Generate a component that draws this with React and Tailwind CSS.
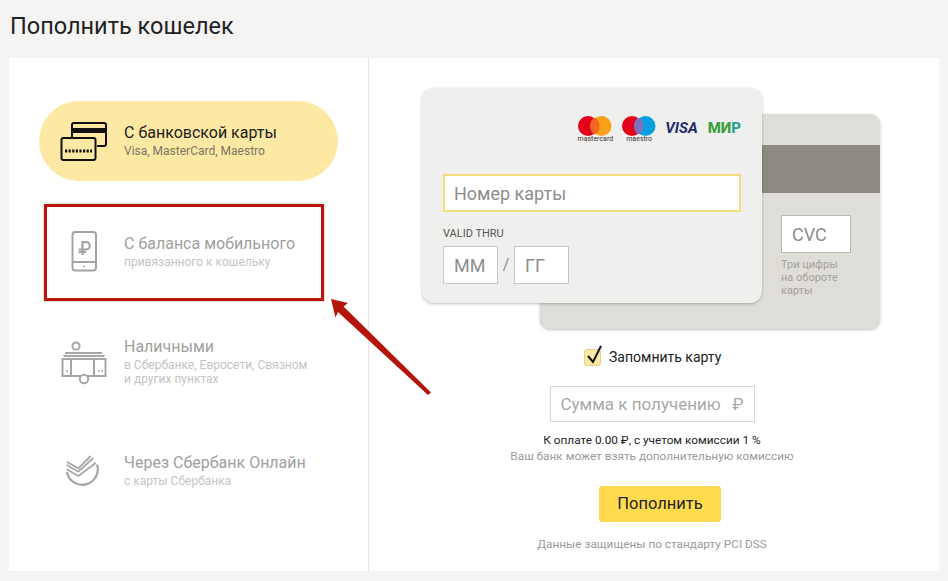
const CardIcon = () => (
  <svg width="48" height="40" viewBox="0 0 48 40" fill="none" stroke="#111" strokeWidth="2">
    <path d="M12 17V4a2 2 0 0 1 2-2h30a2 2 0 0 1 2 2v19a2 2 0 0 1-2 2h-7" />
    <rect x="12" y="7" width="34" height="5" fill="#111" stroke="none" />
    <rect x="1.500" y="17" width="34" height="22" rx="2" fill="#fde9a3" />
    <path d="M5 30h27" strokeWidth="3" strokeDasharray="2.200 1.400" />
  </svg>
);

const PhoneIcon = () => (
  <svg width="27" height="42" viewBox="0 0 27 42" fill="none" stroke="#a3a3a3" strokeWidth="2">
    <rect x="1.500" y="1" width="23.500" height="38.500" rx="3" />
    <path d="M1.500 31h23.500" />
    <circle cx="13" cy="35.500" r="1" fill="#a3a3a3" stroke="none" />
    <path d="M11.500 24V11h3.500a3.700 3.700 0 0 1 0 7.500h-7.500M7.500 21h7.500" strokeWidth="2.200" />
  </svg>
);

const CashIcon = () => (
  <svg width="46" height="45" viewBox="0 0 46 45" fill="none" stroke="#a6a6a4" strokeWidth="2">
    <circle cx="15" cy="6" r="3.600" />
    <path d="M4 13h37M2.500 16h41" />
    <rect x="1.500" y="19" width="43" height="17" />
    <path d="M10 19v17M33 19v17" />
    <circle cx="23" cy="39" r="4.200" fill="#fff" />
    <path d="M5.500 31h1.500M37 31h1.500M40.500 31H42" strokeWidth="2" />
  </svg>
);

const SberIcon = () => (
  <svg width="36" height="34" viewBox="0 0 36 34" fill="none" stroke="#a6a6a4" strokeWidth="2">
    <path d="M1 18A15.500 15.500 0 1 0 31 10.500" strokeWidth="2.200" />
    <path d="M0.700 7.700L12.300 14.300 24.700 2M0.700 11L12.300 17.700 27.300 4M0.700 15.300L12.300 22 30 8.700" strokeWidth="1.800" />
  </svg>
);

const Arrow = () => (
  <svg className="absolute left-[325px] top-[294px]" width="110" height="105" viewBox="325 294 110 105">
    <path d="M331 299L348 303 343.500 306.500 431 392.500 428 395 338 312 335.500 317.500Z" fill="#b3150b" />
  </svg>
);

function Method({ icon, title, sub, active, className }) {
  return (
    <div className={`flex h-20 w-[299px] items-center ${active ? "rounded-full bg-[#fde9a3]" : ""} ${className}`}>
      <div className="flex w-[85px] shrink-0 justify-center pl-[5px]">{icon}</div>
      <div className="pb-[1px]">
        <div className={`text-[16px] leading-[20px] ${active ? "text-[#1c1c1c]" : "text-[#a0a0a0]"}`}>{title}</div>
        <div className={`mt-[1px] text-[12px] leading-[14px] ${active ? "text-[#7a7668]" : "text-[#c4c4c4]"}`}>{sub}</div>
      </div>
    </div>
  );
}

const TinyLogo = ({ left, right, label, overlap }) => (
  <div className="flex flex-col items-center">
    <svg width="34" height="20" viewBox="0 0 34 20">
      <circle cx="10" cy="10" r="10" fill={left} />
      <circle cx="23.500" cy="10" r="10" fill={right} />
      <path d="M16.750 1.400a10 10 0 0 1 0 17.200a10 10 0 0 1 0-17.200Z" fill={overlap} />
    </svg>
    <div className="mt-[-1px] text-[7px] leading-[8px] text-[#333]">{label}</div>
  </div>
);

export default function App() {
  return (
    <div className="relative h-[581px] w-[948px] overflow-hidden bg-[#f5f4f2] font-['Roboto','Noto_Sans',sans-serif]">
      <h1 className="pl-[10px] pt-[10px] text-[23.5px] font-normal leading-[32px] text-[#222]">Пополнить кошелек</h1>
      <div className="ml-[9px] mt-[16px] flex h-[513px] w-[930px] bg-white">
        <div className="w-[360px] shrink-0 border-r border-[#e6e6e6] pl-[30px] pt-[43px]">
          <Method active icon={<CardIcon />} title="С банковской карты" sub="Visa, MasterCard, Maestro" />
          <Method className="mt-[31px]" icon={<PhoneIcon />} title="С баланса мобильного" sub="привязанного к кошельку" />
          <Method className="mt-[30px]" icon={<CashIcon />} title="Наличными" sub={<>в Сбербанке, Евросети, Связном<br />и других пунктах</>} />
          <Method className="mt-[29px]" icon={<SberIcon />} title="Через Сбербанк Онлайн" sub="с карты Сбербанка" />
        </div>
        <div className="flex w-[566px] flex-col items-center pt-[30px]">
          <div className="relative mr-[2px] h-[241px] w-[458px]">
            <div className="absolute left-[118px] top-[26px] h-[215px] w-[340px] rounded-[10px] bg-[#dfddd7] shadow-[0_1px_3px_rgba(0,0,0,0.25)]">
              <div className="mt-[31px] h-[48px] bg-[#8c8a82]" />
              <div className="ml-[241px] mt-[22px] flex h-[38px] w-[70px] items-center border border-[#b9b8b2] bg-white pl-[10px] text-[18px] text-[#8d8d8d]">CVC</div>
              <div className="ml-[241px] mt-[5px] text-[11px] leading-[13px] text-[#a5a39c]">Три цифры<br />на обороте<br />карты</div>
            </div>
            <div className="absolute left-0 top-0 h-[215px] w-[340px] rounded-[12px] bg-[#efefed] px-[21px] pt-[28px] shadow-[0_1px_3px_rgba(0,0,0,0.25)]">
              <div className="flex h-[30px] items-start justify-end gap-[9px]">
                <TinyLogo left="#e3001b" right="#f9a01b" overlap="#f26522" label="mastercard" />
                <TinyLogo left="#e3001b" right="#0a9fe0" overlap="#7b73c0" label="maestro" />
                <div className="mt-[2px] text-[15px] font-bold italic leading-[20px] text-[#1f2a6b]">VISA</div>
                <div className="ml-[1px] mt-[2px] text-[15px] font-extrabold leading-[20px] text-[#3aa03e]">МИ<span className="text-[#2a9d8f]">Р</span></div>
              </div>
              <div className="mt-[28px] flex h-[38px] items-center border-2 border-[#f5dc7e] bg-white pl-[9px] pt-[1px] text-[18px] text-[#8d8d8d]">Номер карты</div>
              <div className="mt-[15px] text-[11px] leading-[14px] text-[#555]">VALID THRU</div>
              <div className="mt-[5px] flex items-center">
                <div className="flex h-[38px] w-[55px] items-center border border-[#c8c8c6] bg-white pl-[10px] text-[18px] text-[#8d8d8d]">ММ</div>
                <div className="w-[16px] text-center text-[16px] text-[#8d8d8d]">/</div>
                <div className="flex h-[38px] w-[55px] items-center border border-[#c8c8c6] bg-white pl-[10px] text-[18px] text-[#8d8d8d]">ГГ</div>
              </div>
            </div>
          </div>
          <div className="mt-[17px] flex h-[22px] w-[136px] items-center">
            <div className="relative h-[17px] w-[17px] shrink-0 rounded-[3px] border border-[#e3d08c] bg-[#fde9a3]">
              <svg className="absolute left-[1px] top-[-5px]" width="18" height="20" viewBox="0 0 18 20" fill="none" stroke="#111" strokeWidth="2">
                <path d="M2 11l5 6L15 1" />
              </svg>
            </div>
            <span className="ml-[8px] whitespace-nowrap text-[14px] text-[#222]">Запомнить карту</span>
          </div>
          <div className="mt-[18px] flex h-[36px] w-[205px] items-center justify-between border border-[#d6d6d6] pl-[10px] pr-[10px] pt-[1px] text-[17px] text-[#a8a8a8]">
            <span>Сумма к получению</span><span>₽</span>
          </div>
          <div className="mt-[10px] text-[11.8px] leading-[16px] text-[#222]">К оплате 0.00 ₽, с учетом комиссии 1 %</div>
          <div className="text-[11.8px] leading-[16px] text-[#9a9a9a]">Ваш банк может взять дополнительную комиссию</div>
          <div className="ml-[16px] mt-[22px] flex h-[36px] w-[122px] items-center justify-center rounded-[3px] bg-[#ffdb4d] text-[16.5px] text-[#222]">Пополнить</div>
          <div className="mt-[14px] text-[11.8px] leading-[16px] text-[#9a9a9a]">Данные защищены по стандарту PCI DSS</div>
        </div>
      </div>
      <div className="absolute left-[44px] top-[204px] h-[97px] w-[280px] border-[3px] border-[#b5170d] shadow-[0_0_2px_rgba(120,0,0,0.4)]" />
      <Arrow />
    </div>
  );
}
